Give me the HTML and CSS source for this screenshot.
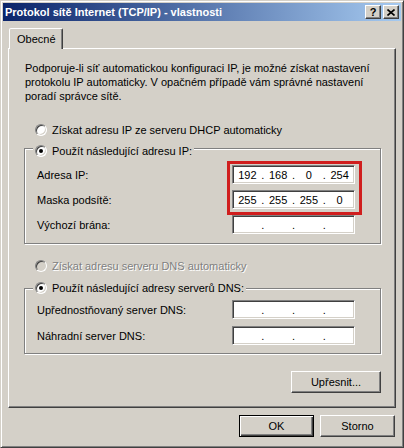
FILE: index.html
```html
<!DOCTYPE html>
<html lang="cs">
<head>
    <meta charset="UTF-8">
    <title>Protokol sítě Internet (TCP/IP) - vlastnosti</title>
    <link rel="stylesheet" href="styles.css">
</head>
<body>
    <div class="window">
        <div class="titlebar">
            <span class="title">Protokol sítě Internet (TCP/IP) - vlastnosti</span>
            <div class="title-buttons">
                <span class="tbtn">?</span>
                <span class="tbtn">
                    <svg width="8" height="7" viewBox="0 0 8 7">
                        <path d="M0.5 0.5 L7.5 6.5 M7.5 0.5 L0.5 6.5" stroke="#000" stroke-width="1.6" fill="none"/>
                    </svg>
                </span>
            </div>
        </div>

        <div class="dialog">
            <div class="tabs">
                <div class="tab">Obecné</div>
            </div>

            <div class="panel">
                <p class="intro">Podporuje-li síť automatickou konfiguraci IP, je možné získat nastavení protokolu IP automaticky. V opačném případě vám správné nastavení poradí správce sítě.</p>

                <div class="radio radio-first">
                    <span class="radio-dot"></span>
                    <span>Získat adresu IP ze serveru DHCP automaticky</span>
                </div>

                <div class="group group-ip">
                    <div class="radio group-title">
                        <span class="radio-dot checked"></span>
                        <span>Použít následující adresu IP:</span>
                    </div>
                    <div class="row">
                        <span>Adresa IP:</span>
                        <div class="ip"><span>192</span><i>.</i><span>168</span><i>.</i><span>0</span><i>.</i><span>254</span></div>
                    </div>
                    <div class="row">
                        <span>Maska podsítě:</span>
                        <div class="ip"><span>255</span><i>.</i><span>255</span><i>.</i><span>255</span><i>.</i><span>0</span></div>
                    </div>
                    <div class="row">
                        <span>Výchozí brána:</span>
                        <div class="ip"><span></span><i>.</i><span></span><i>.</i><span></span><i>.</i><span></span></div>
                    </div>
                    <div class="highlight"></div>
                </div>

                <div class="radio radio-disabled">
                    <span class="radio-dot"></span>
                    <span>Získat adresu serveru DNS automaticky</span>
                </div>

                <div class="group group-dns">
                    <div class="radio group-title">
                        <span class="radio-dot checked"></span>
                        <span>Použít následující adresy serverů DNS:</span>
                    </div>
                    <div class="row">
                        <span>Upřednostňovaný server DNS:</span>
                        <div class="ip"><span></span><i>.</i><span></span><i>.</i><span></span><i>.</i><span></span></div>
                    </div>
                    <div class="row">
                        <span>Náhradní server DNS:</span>
                        <div class="ip"><span></span><i>.</i><span></span><i>.</i><span></span><i>.</i><span></span></div>
                    </div>
                </div>

                <div class="panel-actions">
                    <button class="button button-wide">Upřesnit...</button>
                </div>
            </div>

            <div class="dialog-actions">
                <button class="button button-default">OK</button>
                <button class="button">Storno</button>
            </div>
        </div>
    </div>
</body>
</html>
```

FILE: styles.css
```css
:root {
    --face: #d4d0c8;
    --shadow: #808080;
    --dark: #404040;
    --light: #ffffff;
}

* {
    box-sizing: border-box;
}

body {
    margin: 0;
    background: var(--face);
    font-family: "Liberation Sans", Arial, sans-serif;
    font-size: 11px;
    color: #000;
}

/* window frame */
.window {
    width: 404px;
    height: 448px;
    border: 1px solid;
    border-color: var(--face) var(--dark) var(--dark) var(--face);
    box-shadow: inset 1px 1px var(--light), inset -1px -1px var(--shadow);
    padding: 2px;
    display: flex;
    flex-direction: column;
}

.titlebar {
    height: 18px;
    padding: 0 2px;
    background: linear-gradient(to right, #0a246a, #a6caf0);
    display: flex;
    align-items: center;
    justify-content: space-between;
}

.title {
    color: #fff;
    font-weight: bold;
}

.title-buttons {
    display: flex;
    gap: 2px;
}

.tbtn {
    width: 16px;
    height: 14px;
    background: var(--face);
    border: 1px solid;
    border-color: var(--light) var(--dark) var(--dark) var(--light);
    box-shadow: inset -1px -1px var(--shadow);
    display: flex;
    align-items: center;
    justify-content: center;
    font-weight: bold;
    font-size: 11px;
    line-height: 1;
}

.dialog {
    flex: 1;
    display: flex;
    flex-direction: column;
    padding: 7px 5px 0 5px;
}

/* tabs */
.tabs {
    display: flex;
    padding-left: 1px;
    position: relative;
    z-index: 1;
}

.tab {
    height: 21px;
    margin-bottom: -1px;
    padding: 0 6px 1px 7px;
    background: var(--face);
    border: 1px solid;
    border-bottom: none;
    border-color: var(--light) var(--dark) transparent var(--light);
    border-radius: 2px 2px 0 0;
    box-shadow: inset -1px 0 var(--shadow);
    display: flex;
    align-items: center;
}

.panel {
    height: 360px;
    border: 1px solid;
    border-color: var(--light) var(--dark) var(--dark) var(--light);
    box-shadow: inset -1px -1px var(--shadow);
    padding: 12px 13px 0 16px;
    display: flex;
    flex-direction: column;
}

.intro {
    margin: 0;
    line-height: 14px;
}

/* radio buttons */
.radio {
    height: 14px;
    display: flex;
    align-items: center;
    gap: 5px;
    line-height: 14px;
}

.radio-first {
    margin: 20px 0 0 10px;
}

.radio-dot {
    width: 12px;
    height: 12px;
    flex: none;
    border-radius: 50%;
    background: #fff;
    border: 1px solid;
    border-color: var(--shadow) var(--light) var(--light) var(--shadow);
    box-shadow: inset 1px 1px var(--dark), inset -1px -1px var(--face);
    display: flex;
    align-items: center;
    justify-content: center;
}

.radio-dot.checked::after {
    content: "";
    width: 4px;
    height: 4px;
    border-radius: 50%;
    background: #000;
}

.radio-disabled {
    margin: 15px 0 0 10px;
    color: var(--shadow);
    text-shadow: 1px 1px var(--light);
}

.radio-disabled .radio-dot {
    background: var(--face);
}

/* group boxes */
.group {
    position: relative;
    margin: 0 1px 0 -1px;
    padding: 0 25px 9px 12px;
    border: 1px solid var(--shadow);
    box-shadow: inset 1px 1px var(--light), 1px 1px var(--light);
    display: flex;
    flex-direction: column;
}

.group-ip {
    margin-top: 11px;
}

.group-dns {
    margin-top: 15px;
    padding-bottom: 8px;
}

.group-title {
    align-self: flex-start;
    margin: -5px 0 0 -4px;
    padding: 0 2px;
    background: var(--face);
}

.group-dns .group-title {
    margin-top: -8px;
}

.row {
    height: 19px;
    margin-top: 6px;
    display: flex;
    align-items: center;
    justify-content: space-between;
}

.group-ip .group-title + .row {
    margin-top: 7px;
}

.group-dns .row {
    margin-top: 7px;
}

.group-dns .group-title + .row {
    margin-top: 5px;
}

.ip {
    width: 123px;
    height: 19px;
    background: #fff;
    border: 1px solid;
    border-color: var(--shadow) var(--light) var(--light) var(--shadow);
    box-shadow: inset 1px 1px var(--dark), inset -1px -1px var(--face);
    padding: 0 1px;
    display: flex;
    align-items: center;
}

.ip span {
    flex: 1;
    text-align: center;
}

.ip i {
    width: 4px;
    font-style: normal;
    text-align: center;
}

.highlight {
    position: absolute;
    left: 202px;
    top: 12px;
    width: 135px;
    height: 54px;
    border: 3px solid #d01e1e;
}

/* buttons */
.button {
    height: 22px;
    width: 75px;
    padding: 0;
    font: inherit;
    color: #000;
    background: var(--face);
    border: 1px solid;
    border-color: var(--light) var(--dark) var(--dark) var(--light);
    box-shadow: inset -1px -1px var(--shadow), inset 1px 1px var(--face);
}

.button-wide {
    width: 90px;
}

.button-default {
    border-color: #000;
    box-shadow: inset 1px 1px var(--light), inset -1px -1px var(--dark), inset -2px -2px var(--shadow);
}

.panel-actions {
    margin: 17px 1px 0 0;
    display: flex;
    justify-content: flex-end;
}

.dialog-actions {
    margin-top: 7px;
    padding-right: 1px;
    display: flex;
    justify-content: flex-end;
    gap: 6px;
}
```
